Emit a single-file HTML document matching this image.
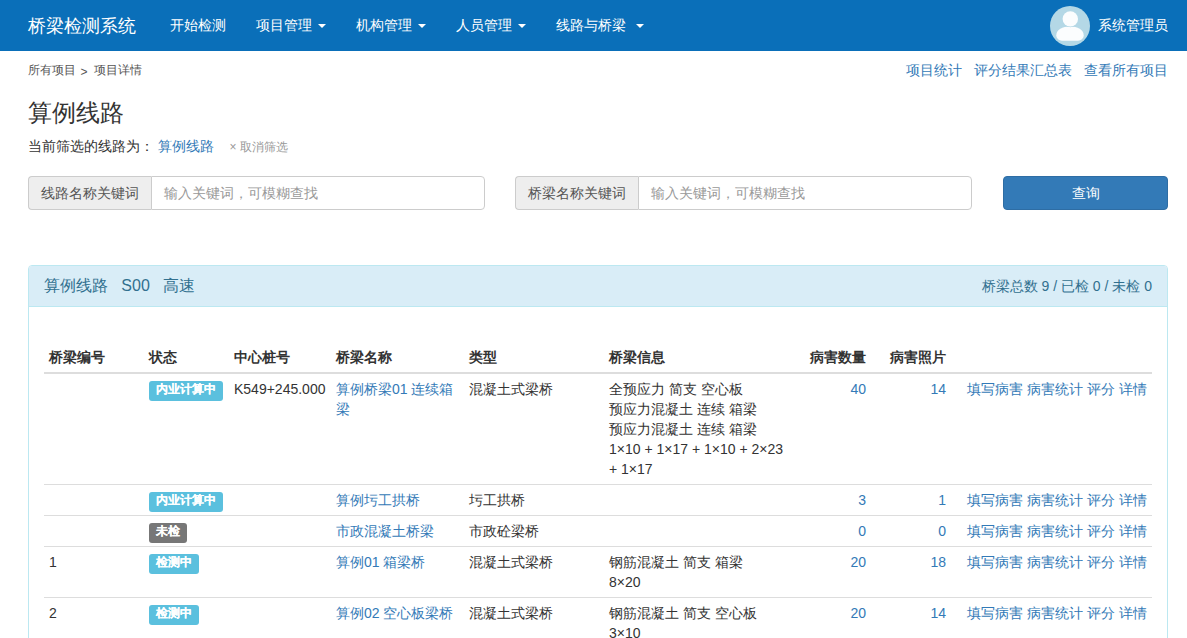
<!DOCTYPE html>
<html><head><meta charset="utf-8">
<style>
*{box-sizing:border-box;margin:0;padding:0}
html,body{width:1187px;height:638px;overflow:hidden;background:#fff}
body{font-family:"Liberation Sans",sans-serif;font-size:14px;line-height:20px;color:#333;position:relative}
a{color:#337ab7;text-decoration:none}
.abs{position:absolute;white-space:nowrap}
/* navbar */
.nav{position:absolute;left:0;top:0;width:1187px;height:51px;background:#0a6fb9}
.brand{position:absolute;left:28px;top:16px;font-size:18px;line-height:20px;color:#fff}
.ni{position:absolute;top:15px;color:#fff;font-size:14px;line-height:20px;white-space:nowrap}
.caret{display:inline-block;width:0;height:0;margin-left:2px;vertical-align:middle;border-top:4px solid #fff;border-left:4px solid transparent;border-right:4px solid transparent}
.avatar{position:absolute;left:1050px;top:6px;width:40px;height:40px;border-radius:50%;background:#b4d8e6;overflow:hidden}
.user{position:absolute;left:1098px;top:15px;color:#fff;font-size:14px;line-height:20px}
/* top */
.crumb{position:absolute;left:28px;top:60px;font-size:12px;line-height:20px;color:#555}
.rlinks{position:absolute;right:19px;top:60px;font-size:14px;line-height:20px}
.rlinks a{margin-left:12px}
h1{position:absolute;left:28px;top:98px;font-size:24px;line-height:30px;font-weight:normal;color:#333}
.filter{position:absolute;left:28px;top:136px;font-size:14px;line-height:20px;color:#333;white-space:nowrap}
.filter .x{font-size:12px;color:#999;margin-left:15.5px}
/* search */
.ig{position:absolute;top:176px;height:34px;width:457px;display:flex}
.ig .ad{height:34px;padding:6px 12px;font-size:14px;line-height:20px;color:#555;background:#eee;border:1px solid #ccc;border-right:0;border-radius:4px 0 0 4px;white-space:nowrap}
.ig .in{flex:1;height:34px;padding:6px 12px;font-size:14px;line-height:20px;color:#999;background:#fff;border:1px solid #ccc;border-radius:0 4px 4px 0;white-space:nowrap}
.btn{position:absolute;left:1003px;top:176px;width:165px;height:34px;background:#337ab7;border:1px solid #2e6da4;border-radius:4px;color:#fff;text-align:center;font-size:14px;line-height:20px;padding:6px 0}
/* panel */
.panel{position:absolute;left:28px;top:265px;width:1140px;height:400px;border:1px solid #bce8f1;border-radius:4px}
.ph{height:41px;background:#d9edf7;border-bottom:1px solid #bce8f1;border-radius:3px 3px 0 0;color:#31708f;position:relative}
.ph .t{position:absolute;left:15px;top:8.5px;font-size:16px;line-height:22px;white-space:nowrap}
.ph .r{position:absolute;right:15px;top:10px;font-size:14px;line-height:20px;white-space:nowrap}
table{position:absolute;left:15px;top:76px;width:1108px;border-collapse:collapse;table-layout:fixed}
th,td{white-space:nowrap;padding:5px;vertical-align:top;text-align:left;line-height:20px;font-size:14px}
th{font-weight:bold;border-bottom:2px solid #ddd;color:#333}
td{border-top:1px solid #ddd}
tr.first td{border-top:0}
.rt{text-align:right}
.lbl{text-shadow:0.4px 0 0 #fff;display:inline-block;font-size:12px;line-height:17px;height:19.5px;font-weight:bold;color:#fff;padding:0 7px;border-radius:3px;vertical-align:top;position:relative;top:2px}
.info{background:#5bc0de}
.def{background:#777}
</style></head><body>
<div class="nav">
  <div class="brand">桥梁检测系统</div>
  <div class="ni" style="left:170px">开始检测</div>
  <div class="ni" style="left:256px">项目管理 <span class="caret"></span></div>
  <div class="ni" style="left:356px">机构管理 <span class="caret"></span></div>
  <div class="ni" style="left:456px">人员管理 <span class="caret"></span></div>
  <div class="ni" style="left:556px">线路与桥梁 &nbsp;<span class="caret"></span></div>
  <div class="avatar">
    <svg width="40" height="40" viewBox="0 0 40 40">
      <path d="M6.3 29.3 C6.3 24 12.5 20.6 20 20.6 C27.5 20.6 33.7 24 33.7 29.3 C33.7 33 30.5 34.8 26.5 34.8 L13.5 34.8 C9.5 34.8 6.3 33 6.3 29.3 Z" fill="#fbfdfe"/>
      <circle cx="20.3" cy="12.9" r="8.3" fill="#b4d8e6"/>
      <circle cx="20.3" cy="12.9" r="7.7" fill="#fbfdfe"/>
    </svg>
  </div>
  <div class="user">系统管理员</div>
</div>

<div class="crumb">所有项目<span style="display:inline-block;margin-left:4.5px;margin-right:6.5px;position:relative;top:2px">&gt;</span>项目详情</div>
<div class="rlinks"><a>项目统计</a><a>评分结果汇总表</a><a>查看所有项目</a></div>
<h1>算例线路</h1>
<div class="filter">当前筛选的线路为： <a>算例线路</a><span class="x">× 取消筛选</span></div>

<div class="ig" style="left:28px"><div class="ad">线路名称关键词</div><div class="in">输入关键词，可模糊查找</div></div>
<div class="ig" style="left:515px"><div class="ad">桥梁名称关键词</div><div class="in">输入关键词，可模糊查找</div></div>
<div class="btn">查询</div>

<div class="panel">
  <div class="ph"><div class="t">算例线路&nbsp;&nbsp;&nbsp;S00&nbsp;&nbsp;&nbsp;高速</div><div class="r">桥梁总数 9 / 已检 0 / 未检 0</div></div>
  <table>
    <colgroup><col style="width:100px"><col style="width:85px"><col style="width:102px"><col style="width:133px"><col style="width:140px"><col style="width:201px"><col style="width:66px"><col style="width:80px"><col style="width:201px"></colgroup>
    <thead><tr><th>桥梁编号</th><th>状态</th><th>中心桩号</th><th>桥梁名称</th><th>类型</th><th>桥梁信息</th><th class="rt">病害数量</th><th class="rt">病害照片</th><th></th></tr></thead>
    <tbody>
    <tr class="first"><td></td><td><span class="lbl info">内业计算中</span></td><td>K549+245.000</td><td><a>算例桥梁01 连续箱<br>梁</a></td><td>混凝土式梁桥</td><td>全预应力 简支 空心板<br>预应力混凝土 连续 箱梁<br>预应力混凝土 连续 箱梁<br>1×10 + 1×17 + 1×10 + 2×23<br>+ 1×17</td><td class="rt"><a>40</a></td><td class="rt"><a>14</a></td><td class="rt"><a>填写病害</a> <a>病害统计</a> <a>评分</a> <a>详情</a></td></tr>
    <tr><td></td><td><span class="lbl info">内业计算中</span></td><td></td><td><a>算例圬工拱桥</a></td><td>圬工拱桥</td><td></td><td class="rt"><a>3</a></td><td class="rt"><a>1</a></td><td class="rt"><a>填写病害</a> <a>病害统计</a> <a>评分</a> <a>详情</a></td></tr>
    <tr><td></td><td><span class="lbl def">未检</span></td><td></td><td><a>市政混凝土桥梁</a></td><td>市政砼梁桥</td><td></td><td class="rt"><a>0</a></td><td class="rt"><a>0</a></td><td class="rt"><a>填写病害</a> <a>病害统计</a> <a>评分</a> <a>详情</a></td></tr>
    <tr><td>1</td><td><span class="lbl info">检测中</span></td><td></td><td><a>算例01 箱梁桥</a></td><td>混凝土式梁桥</td><td>钢筋混凝土 简支 箱梁<br>8×20</td><td class="rt"><a>20</a></td><td class="rt"><a>18</a></td><td class="rt"><a>填写病害</a> <a>病害统计</a> <a>评分</a> <a>详情</a></td></tr>
    <tr><td>2</td><td><span class="lbl info">检测中</span></td><td></td><td><a>算例02 空心板梁桥</a></td><td>混凝土式梁桥</td><td>钢筋混凝土 简支 空心板<br>3×10</td><td class="rt"><a>20</a></td><td class="rt"><a>14</a></td><td class="rt"><a>填写病害</a> <a>病害统计</a> <a>评分</a> <a>详情</a></td></tr>
    </tbody>
  </table>
</div>
</body></html>
